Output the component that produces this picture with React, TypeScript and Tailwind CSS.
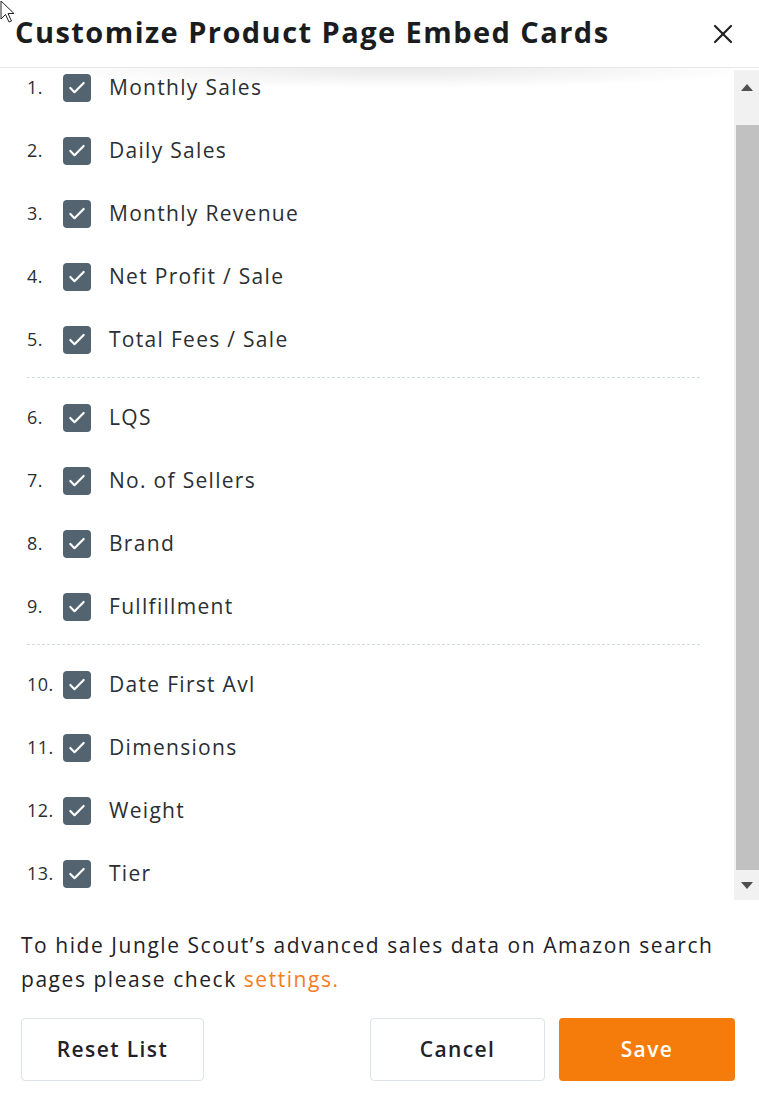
import { Check, X } from 'lucide-react'

const GROUPS: string[][] = [
  ['Monthly Sales', 'Daily Sales', 'Monthly Revenue', 'Net Profit / Sale', 'Total Fees / Sale'],
  ['LQS', 'No. of Sellers', 'Brand', 'Fullfillment'],
  ['Date First Avl', 'Dimensions', 'Weight', 'Tier'],
]

const FONT = { fontFamily: '"Open Sans", "Noto Sans", sans-serif' }

function Row({ n, label }: { n: number; label: string }) {
  return (
    <div className="flex items-center h-[63px]">
      <span className="w-[36px] text-[18px] text-[#2b2f33] tracking-[0.5px]">{n}.</span>
      <span className="flex items-center justify-center w-[28px] h-[28px] rounded-[4px] bg-[#536470]">
        <Check size={20} strokeWidth={2.6} color="#ffffff" />
      </span>
      <span className="ml-[18px] text-[21px] text-[#2b2f33] tracking-[1.3px]">{label}</span>
    </div>
  )
}

export default function App() {
  let counter = 0
  return (
    <div className="relative w-[759px] h-[1095px] bg-white flex flex-col" style={FONT}>
      {/* mouse cursor from the screenshot */}
      <svg className="absolute left-0 top-0" width="18" height="26" viewBox="0 0 18 26">
        <path d="M1 1 L1 19 L5.5 14.5 L9 22 L11.5 21 L8 13.5 L14 13.5 Z" fill="#fff" stroke="#222" strokeWidth="1" />
      </svg>

      <div className="flex items-center justify-between h-[68px] pl-[15px] pr-[20px] border-b border-[#e4e8eb]">
        <h1 className="text-[29px] font-bold text-[#1a1c1e] tracking-[1.45px] leading-none pb-[4px]">
          Customize Product Page Embed Cards
        </h1>
        <X size={32} strokeWidth={1.6} color="#222" />
      </div>

      <div className="relative flex h-[832px]">
        <div className="pointer-events-none absolute left-0 right-[30px] top-0 h-[34px] bg-[radial-gradient(ellipse_50%_60%_at_55%_0%,rgba(0,0,0,0.09),rgba(0,0,0,0))]" />
        <div className="flex-1 pl-[27px] pr-[34px] -mt-[12px] overflow-hidden">
          {GROUPS.map((g, gi) => (
            <div key={gi} className={gi > 0 ? 'border-t border-dashed border-[#d3dde0] mt-[6px] pt-[8px]' : ''}>
              {g.map(label => {
                counter += 1
                return <Row key={label} n={counter} label={label} />
              })}
            </div>
          ))}
        </div>
        <div className="w-[25px] mt-[2px] bg-[#f1f1f1] flex flex-col items-end">
          <div className="w-full h-[34px] flex items-center justify-center">
            <div className="w-0 h-0 border-l-[6px] border-r-[6px] border-b-[7px] border-l-transparent border-r-transparent border-b-[#505050]" />
          </div>
          <div className="w-[23px] h-[21px]" />
          <div className="w-[23px] h-[745px] bg-[#c1c1c1]" />
          <div className="w-full flex-1 flex items-center justify-center">
            <div className="w-0 h-0 border-l-[6px] border-r-[6px] border-t-[7px] border-l-transparent border-r-transparent border-t-[#505050]" />
          </div>
        </div>
      </div>

      <p className="px-[21px] mt-[28px] text-[21px] leading-[34px] text-[#1f2226] tracking-[1.55px]">
        To hide Jungle Scout’s advanced sales data on Amazon search pages please check{' '}
        <span className="text-[#f57c1f]">settings.</span>
      </p>

      <div className="flex items-center px-[21px] mt-[22px]">
        <button className="w-[183px] h-[63px] rounded-[4px] border border-[#dde3e8] text-[21px] font-semibold text-[#1f2226] tracking-[1.4px]">
          Reset List
        </button>
        <div className="flex-1" />
        <button className="w-[175px] h-[63px] rounded-[4px] border border-[#dde3e8] text-[21px] font-semibold text-[#1f2226] tracking-[1.4px]">
          Cancel
        </button>
        <button className="ml-[14px] mr-[3px] w-[176px] h-[63px] rounded-[4px] bg-[#f57c0a] text-[21px] font-semibold text-white tracking-[1.4px]">
          Save
        </button>
      </div>
    </div>
  )
}
